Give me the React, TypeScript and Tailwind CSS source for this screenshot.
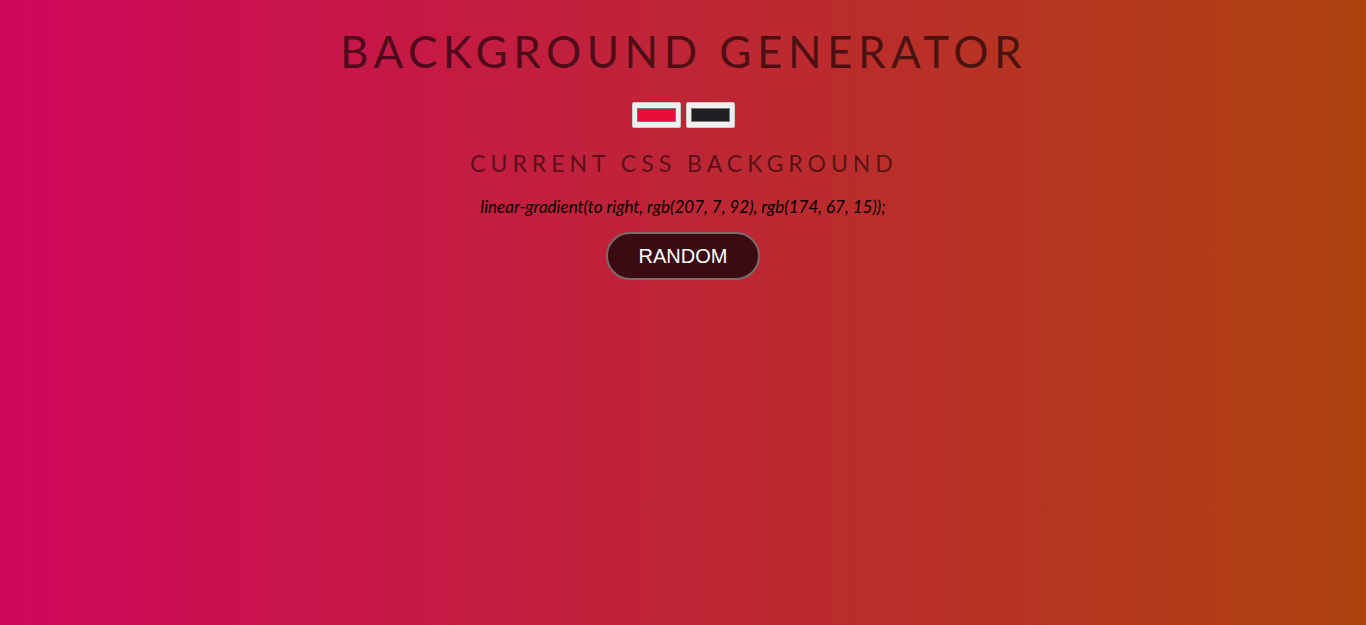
import React from "react";

export default function App() {
  return (
    <div
      className="w-full h-[625px] text-center overflow-hidden"
      style={{ background: "linear-gradient(to right, rgb(207, 7, 92), rgb(174, 67, 15))" }}
    >
      <h1 className="pt-[27px] text-[44px] leading-[48px] tracking-[5.5px] text-black/60 font-['Lato',sans-serif] font-normal pl-[1px]">
        BACKGROUND GENERATOR
      </h1>
      <div className="mt-[27px] flex justify-center gap-[5px]">
        <input type="color" defaultValue="#e60f3a" className="w-[49px] h-[26px] bg-[#efefef] border border-[#c9c9c9] rounded-[2px] px-[2px] py-[1px] cursor-pointer" />
        <input type="color" defaultValue="#1d1f22" className="w-[49px] h-[26px] bg-[#efefef] border border-[#c9c9c9] rounded-[2px] px-[2px] py-[1px] cursor-pointer" />
      </div>
      <h3 className="mt-[21px] text-[23px] leading-[28px] tracking-[5px] text-black/55 font-['Lato',sans-serif] font-normal pl-[2px]">
        CURRENT CSS BACKGROUND
      </h3>
      <p className="mt-[20px] text-[17px] leading-[20px] italic text-black font-['Lato',sans-serif]">
        linear-gradient(to right, rgb(207, 7, 92), rgb(174, 67, 15));
      </p>
      <button className="mt-[15px] w-[154px] h-[48px] rounded-full bg-[#3a0b10] border-2 border-[#7a6a6c] text-white text-[20px] font-['Liberation_Sans',Arial,sans-serif]">
        RANDOM
      </button>
    </div>
  );
}
